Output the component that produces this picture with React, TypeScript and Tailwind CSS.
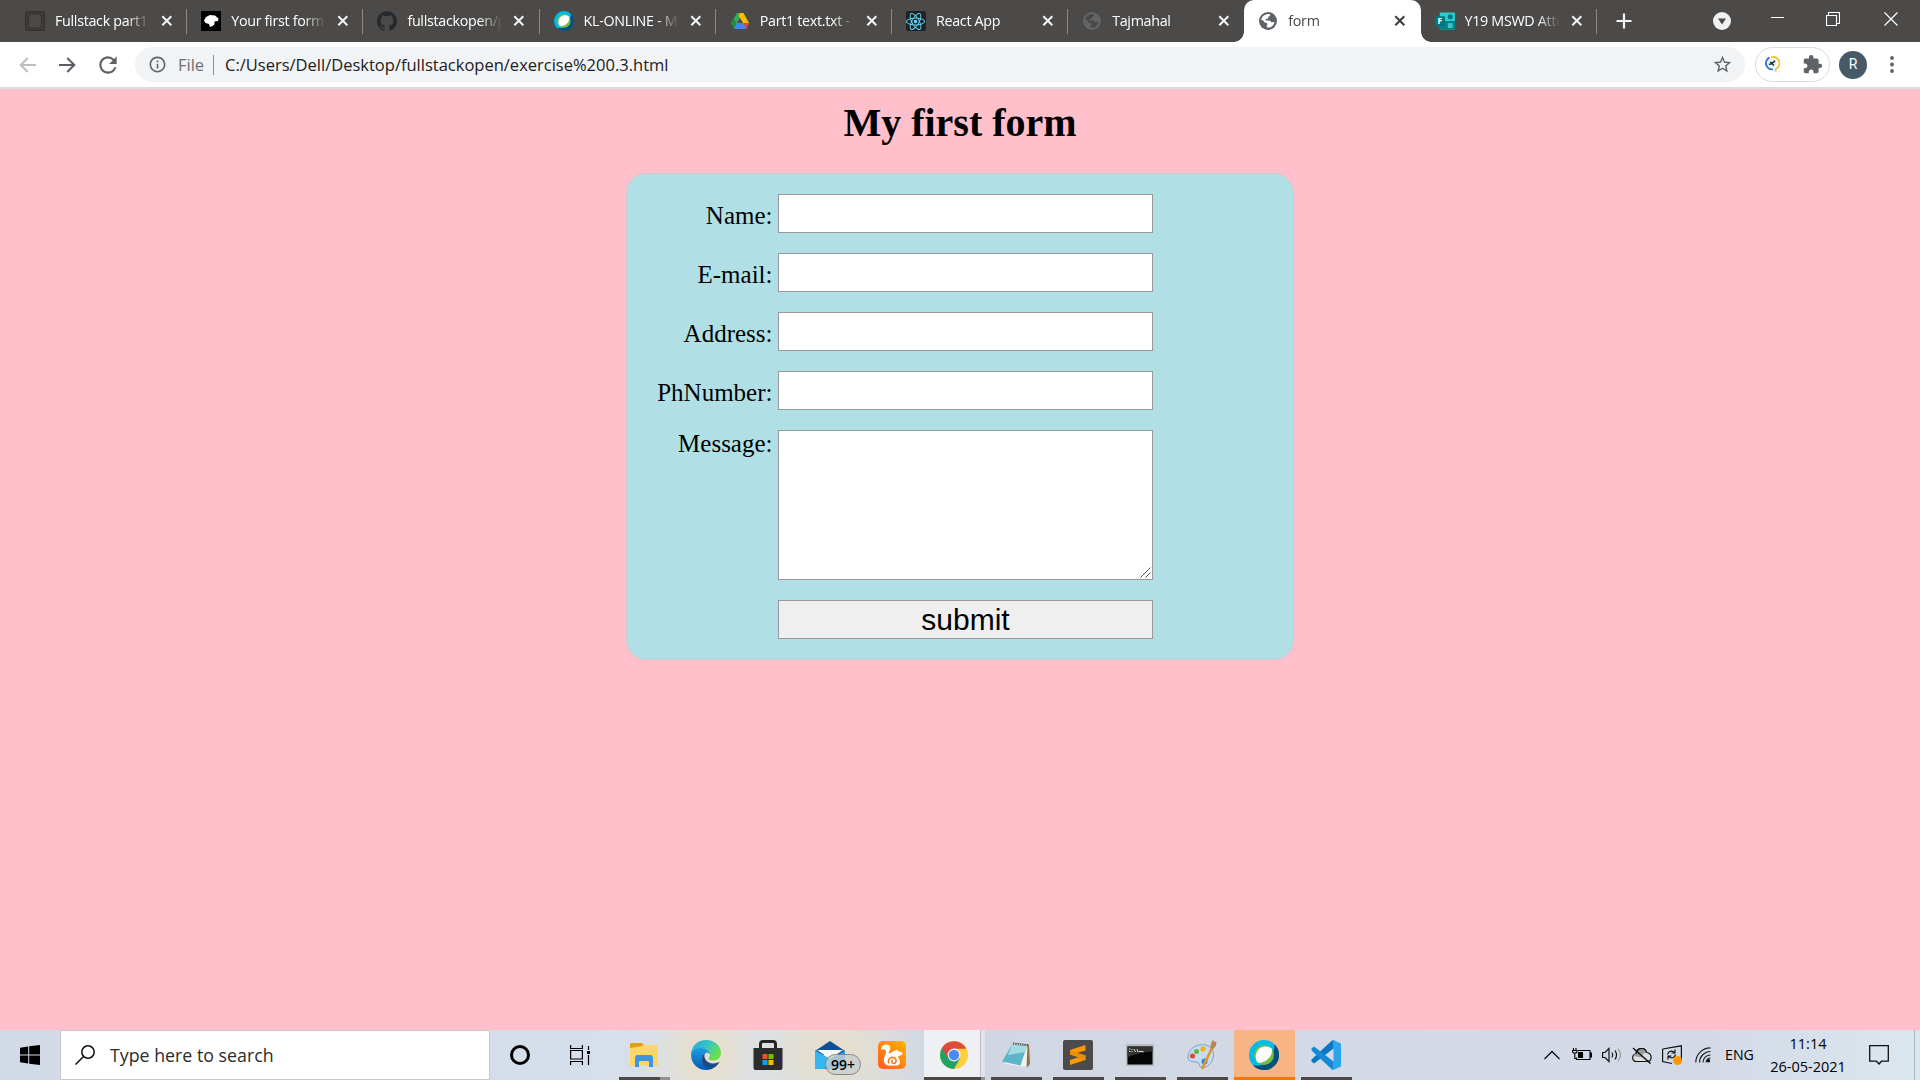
import React from "react";
import { SiGithub, SiReact } from "react-icons/si";
import { MdExtension, MdOutlineInfo, MdRefresh, MdStarBorder } from "react-icons/md";

const Close = ({ dark = false }: { dark?: boolean }) => (
  <svg width="12" height="12" viewBox="0 0 12 12" fill="none" stroke={dark ? "#3c3c3c" : "#f3f3f3"} strokeWidth="2">
    <path d="M1.300 1.300l9 9M10.300 1.300l-9 9" />
  </svg>
);

const Globe = ({ color, land }: { color: string; land: string }) => (
  <svg width="20" height="20" viewBox="0 0 20 20">
    <circle cx="10" cy="10" r="9" fill={color} />
    <path
      d="M3 8.500C4 5.500 6.500 3.500 9.500 3l2.500.3c.6 1.200-.2 2.200-1.600 2.400L9.800 7.800 7.600 8l.3 1.600h3.300c1.200 0 1.500 1.800 3 1.700l2.300-.4c-.4 2.500-2 4.600-4.300 5.500l-1.700.2-1.800-.3v-1.700l1-1.500-1.200-1.200-2-.4L5.500 9.800z"
      fill={land}
    />
  </svg>
);

const Webex = ({ size }: { size: number }) => (
  <svg width={size} height={size} viewBox="0 0 30 30">
    <circle cx="15" cy="15" r="15" fill="#00bceb" />
    <path d="M25.500 4.300A15 15 0 1 1 4 25.200 Q17 27 21.500 19 Q25.500 12 25.500 4.300z" fill="#075077" />
    <circle cx="15" cy="15" r="10" fill="#6cc04a" />
    <path d="M22.700 8.600C24.500 16 17 23.500 8.800 22.800A10 10 0 0 1 22.700 8.600z" fill="#fff" />
  </svg>
);

const Drive = () => (
  <svg width="20" height="20" viewBox="0 0 20 20">
    <path d="M7 2h4.500L10 8l-5.800 9L1 12z" fill="#34a853" />
    <path d="M10 2h3.500l5.500 10h-6L8.500 4.500z" fill="#fbbc04" />
    <path d="M6.200 12H19l-3 6H4z" fill="#4285f4" />
    <path d="M13.500 12H19l-3 6z" fill="#ea4335" />
    <path d="M4 18l-3-6 2.500-4 2.800 4z" fill="#1e8e3e" />
    <path d="M10 7.200L7.300 12h5.400z" fill="#4c4a48" />
  </svg>
);

const Forms = () => (
  <svg width="21" height="18" viewBox="0 0 21 18">
    <rect x="5" width="16" height="18" rx="1" fill="#2ccbd2" />
    <rect x="5" y="9" width="16" height="9" fill="#038387" />
    <circle cx="16" cy="4.500" r="2.700" fill="#04777c" />
    <rect x="13.500" y="11.300" width="5" height="5" fill="#37c6d0" />
    <rect y="4" width="10.500" height="10.500" rx="1" fill="#02777b" />
    <text x="2.600" y="12.300" fontSize="9" fontWeight="700" fill="#fff" fontFamily="Open Sans, sans-serif">F</text>
  </svg>
);

const tabs: { title: string; icon: React.ReactNode; active?: boolean }[] = [
  {
    title: "Fullstack part1",
    icon: (
      <svg width="20" height="20" viewBox="0 0 20 20" fill="none">
        <rect x=".8" y=".8" width="18.400" height="18.400" rx="2.500" fill="#44423f" stroke="#33322f" strokeWidth="1.500" />
        <rect x="3.500" y="3" width="13" height="14" rx="2" fill="#4c4a48" stroke="#32312f" strokeWidth="1.200" />
      </svg>
    ),
  },
  {
    title: "Your first form",
    icon: (
      <svg width="20" height="20" viewBox="0 0 20 20">
        <rect width="20" height="20" fill="#000" />
        <path d="M3 9.500L5 6l4-2 5 .5 3.500 3L17 10l-3.500.5v3l-2 1.500L9 16l-1-3-3.500-1z" fill="#fff" />
      </svg>
    ),
  },
  { title: "fullstackopen/p", icon: <SiGithub size={20} color="#24292e" /> },
  { title: "KL-ONLINE - M", icon: <Webex size={20} /> },
  { title: "Part1 text.txt - G", icon: <Drive /> },
  {
    title: "React App",
    icon: (
      <span className="flex size-5 items-center justify-center rounded-[2px] bg-[#222]">
        <SiReact size={19} color="#61dafb" />
      </span>
    ),
  },
  { title: "Tajmahal", icon: <Globe color="#626466" land="#4c4a48" /> },
  { title: "form", icon: <Globe color="#5f6368" land="#fff" />, active: true },
  { title: "Y19 MSWD Atte", icon: <Forms /> },
];

function Tab({ title, icon, active, line }: { title: string; icon: React.ReactNode; active?: boolean; line: boolean }) {
  return (
    <div className={`relative flex h-[42px] w-[176.200px] shrink-0 items-center pl-[14px] ${active ? "rounded-t-[10px] bg-white" : ""}`}>
      {active && (
        <>
          <span className="absolute bottom-0 -left-[10px] size-[10px] bg-[radial-gradient(circle_at_top_left,#4c4a48_9.500px,#fff_10px)]" />
          <span className="absolute -right-[10px] bottom-0 size-[10px] bg-[radial-gradient(circle_at_top_right,#4c4a48_9.500px,#fff_10px)]" />
        </>
      )}
      <span className="flex w-5 shrink-0 justify-center">{icon}</span>
      <span
        className={`ml-[10px] w-[95px] shrink-0 overflow-hidden text-[14.300px] leading-5 tracking-[-0.300px] whitespace-nowrap [mask-image:linear-gradient(to_right,black_76%,transparent)] ${active ? "text-[#45494d]" : "text-white"}`}
      >
        {title}
      </span>
      <span className="ml-[11px] flex">
        <Close dark={active} />
      </span>
      {line && <span className="absolute top-[9px] right-0 h-[25px] w-px bg-[#8b8a88]" />}
    </div>
  );
}

function TitleBar() {
  return (
    <div className="flex h-[42px] bg-[#4c4a48] pl-[11px]">
      {tabs.map((t, i) => (
        <Tab key={t.title} {...t} line={i !== 6 && i !== 7} />
      ))}
      <div className="flex h-[42px] flex-1 items-center pl-[19px]">
        <svg width="16" height="16" viewBox="0 0 16 16" stroke="#f5f5f5" strokeWidth="2.200">
          <path d="M8 .5v15M.5 8h15" />
        </svg>
        <svg className="ml-[81px]" width="18" height="18" viewBox="0 0 18 18">
          <circle cx="9" cy="9" r="9" fill="#f1f1f1" />
          <path d="M5 6.500h8L9 12.500z" fill="#4c4a48" />
        </svg>
        <svg className="mb-[8px] ml-10" width="13" height="1" viewBox="0 0 13 1">
          <path d="M0 .5h13" stroke="#fff" />
        </svg>
        <svg className="mb-[5px] ml-[42px]" width="14" height="14" viewBox="0 0 14 14" fill="none" stroke="#fff">
          <path d="M.5 3.500h10v10h-10zM2.500 3.500v-3h11v11h-3" strokeWidth="1.100" />
        </svg>
        <svg className="mb-[5px] ml-11" width="14" height="14" viewBox="0 0 14 14" stroke="#fff" strokeWidth="1.200">
          <path d="M.5.5l13 13M13.500.5l-13 13" />
        </svg>
      </div>
    </div>
  );
}

const Arrow = ({ color, flip }: { color: string; flip?: boolean }) => (
  <svg className={flip ? "-scale-x-100" : ""} width="17" height="16" viewBox="0 0 17 16" fill="none" stroke={color} strokeWidth="2">
    <path d="M0 8h15M8.300 1l7 7-7 7" />
  </svg>
);

function Toolbar() {
  return (
    <div className="flex h-[47px] items-center border-b-2 border-[#d9dce0] bg-white pl-[19px]">
      <Arrow color="#bbbdbf" flip />
      <span className="ml-[23px] flex">
        <Arrow color="#5a5e63" />
      </span>
      <MdRefresh size={26} color="#5f6368" className="ml-[19px]" />
      <div className="ml-[14px] flex h-[35px] w-[1610px] items-center rounded-full bg-[#f1f3f4] pl-[13px] text-[16.500px] leading-6">
        <MdOutlineInfo size={19} color="#5f6368" />
        <span className="ml-[11px] w-[28px] text-[#6b6f74]">File</span>
        <span className="ml-[7px] h-5 w-px bg-[#8b8e92]" />
        <span className="ml-[11px] whitespace-nowrap text-[#202124]">C:/Users/Dell/Desktop/fullstackopen/exercise%200.3.html</span>
        <MdStarBorder size={21} color="#5f6368" className="mr-3 ml-auto" />
      </div>
      <div className="ml-[10px] flex h-[35px] w-[75px] items-center rounded-full border border-[#dadce0] pl-[9px]">
        <svg width="15" height="17" viewBox="0 0 17 19" fill="none" strokeWidth="2.200">
          <path d="M5 1.800A7 7 0 0 0 9 15" stroke="#2d6bd0" />
          <path d="M7 1.300A7 7 0 0 1 11.500 14.800" stroke="#fcc02f" />
          <circle cx="8" cy="8.300" r="4" stroke="#dbeaf8" strokeWidth="1.500" />
          <path d="M4.500 9.500l2.500-.7 4.500-3.500M6 6.500l4 4" stroke="#1e2b3a" strokeWidth="1.700" />
          <path d="M10 15h3v4z" fill="#bbc4cd" />
        </svg>
        <MdExtension size={21} color="#5f6368" className="ml-[22px]" />
      </div>
      <span className="ml-[9px] flex size-7 items-center justify-center rounded-full bg-[#455a64] text-[14px] text-white font-['Roboto',sans-serif]">R</span>
      <svg className="ml-[23px]" width="4" height="17" viewBox="0 0 4 17" fill="#5f6368">
        <circle cx="2" cy="2" r="1.900" />
        <circle cx="2" cy="8.500" r="1.900" />
        <circle cx="2" cy="15" r="1.900" />
      </svg>
    </div>
  );
}

function Page() {
  return (
    <div className="flex flex-1 flex-col items-center bg-[#ffc0cb] text-black font-['Liberation_Serif',serif]">
      <h1 className="mt-[11px] text-[40px] leading-[46px] font-bold">My first form</h1>
      <form className="mt-[27px] flex h-[487px] w-[668px] flex-col gap-5 rounded-[20px] border border-[#cccccc] bg-[#b0e0e6] pt-5">
        {["Name:", "E-mail:", "Address:", "PhNumber:"].map((l) => (
          <label key={l} className="flex h-[39px]">
            <span className="w-[145.500px] pt-[8px] text-right text-[25px] leading-[28px]">{l}</span>
            <input className="ml-[5.500px] h-[39px] w-[375px] border border-[#999] bg-white" />
          </label>
        ))}
        <label className="relative flex h-[150px]">
          <span className="w-[145.500px] text-right text-[25px] leading-[28px]">Message:</span>
          <textarea className="ml-[5.500px] h-[150px] w-[375px] resize-none border border-[#999] bg-white" />
          <svg className="absolute top-[137px] left-[513px]" width="11" height="11" viewBox="0 0 11 11" stroke="#555" strokeWidth="1">
            <path d="M.5 10.500l10-10M5.500 10.500l5-5" />
          </svg>
        </label>
        <button type="button" className="ml-[151px] h-[39px] w-[375px] border border-[#999] bg-[#efefef] text-[30px] leading-[37px] font-['Liberation_Sans',sans-serif]">
          submit
        </button>
      </form>
    </div>
  );
}

const Explorer = () => (
  <svg width="28" height="24" viewBox="0 0 28 24">
    <path d="M0 1.500Q0 0 1.500 0H12l2 2v4H0z" fill="#e0a010" />
    <path d="M0 5l11-1.500L14 2h12q2 0 2 1.500V22q0 1-1 1H1q-1 0-1-1z" fill="#fbd668" />
    <path d="M5 24V15q0-3 3-3h12q3 0 3 3v9h-4v-5q0-1-1-1h-8q-1 0-1 1v5z" fill="#3b95df" />
  </svg>
);

const Edge = () => (
  <svg width="30" height="30" viewBox="0 0 30 30">
    <defs>
      <linearGradient id="eg" x1="0" y1="0" x2="1" y2=".5">
        <stop offset="0" stopColor="#2aa7dc" />
        <stop offset=".5" stopColor="#35c1c9" />
        <stop offset="1" stopColor="#6ce04b" />
      </linearGradient>
      <linearGradient id="eb" x1="0" y1="0" x2="0" y2="1">
        <stop offset="0" stopColor="#1b9de2" />
        <stop offset="1" stopColor="#0c5ab4" />
      </linearGradient>
    </defs>
    <path d="M0 14C1 5 7 0 15 0c9 0 15 6 15 13 0 5-3.500 7.500-7.500 7.500-3 0-5-1-5-2 0-.7 1.500-1.500 1.500-4C19 11 15 8.500 10 8.500 5 8.500 1 11 0 14z" fill="url(#eg)" />
    <path d="M0 14.500C.5 10 5 8 9.500 8c5.500 0 9.500 3 9.500 6.500-1-1.800-3-2-4.500-1.500C9.500 15 10 26 22 28.200 19 30 17 30 15 30 7 30 0 24 0 14.500z" fill="url(#eb)" />
    <path d="M14.500 13C9 15 9.500 29 20 29c3.500-1 6.500-3.500 8.500-7-1 0-9.500 4.500-14-2.500-1.500-2.500-1.500-5 0-6.500z" fill="#164c8e" />
  </svg>
);

const Store = () => (
  <svg width="30" height="30" viewBox="0 0 30 30">
    <path d="M7.500 9V4q0-2.500 2.500-2.500h10q2.500 0 2.500 2.500v5" fill="none" stroke="#262626" strokeWidth="3" />
    <path d="M.5 8h29v20q0 2-2 2h-25q-2 0-2-2z" fill="#2c2c2c" />
    <path d="M9.500 14H14.500V19H9.500z" fill="#f25022" />
    <path d="M15.500 14H20.500V19H15.500z" fill="#7fba00" />
    <path d="M9.500 20H14.500V25H9.500z" fill="#00a4ef" />
    <path d="M15.500 20H20.500V25H15.500z" fill="#ffb900" />
  </svg>
);

const Mail = () => (
  <span className="relative flex">
    <svg width="30" height="28" viewBox="0 0 30 28">
      <path d="M0 10L15 0l15 10v4H0z" fill="#0f4f96" />
      <path d="M2 9h26l-13 9z" fill="#f6f8fa" />
      <path d="M0 9.500L15 18l15-8.500V28H0z" fill="#1e98e4" />
      <path d="M0 28V9.500L18 20 8 28z" fill="#35b6f1" />
    </svg>
    <span className="absolute top-[13px] left-[10px] flex h-[21px] w-9 items-center justify-center rounded-full border border-[#858585] bg-[#c9cdcf]/80 text-[14px] font-semibold text-black">
      99+
    </span>
  </span>
);

const UcBrowser = () => (
  <svg width="28" height="28" viewBox="0 0 28 28">
    <defs>
      <linearGradient id="uc" x1="1" y1="0" x2="0" y2="1">
        <stop offset="0" stopColor="#ffb400" />
        <stop offset="1" stopColor="#ff5a1f" />
      </linearGradient>
    </defs>
    <rect width="28" height="28" rx="5" fill="url(#uc)" />
    <path d="M3 9C3 5 6 3 9 3.500c4 .7 4 5 2 7-1 1.500 0 2.500 1.500 1.500 2.500-2 5-2 6-3.500l1.500 1.500 4 1.500c1.500 1 0 3-4 3.500 0 2 2 3 2 6 0 2-1.500 3.500-3 3.500H10c-4-1-5-5-3.500-8.500C8 12.500 9 9 6.500 8.500 5 8 4 8 3 9z" fill="#fff" />
    <path d="M11 22.500c-2-4 2-7.500 5.500-5.500 3 2 1.500 5.500-1 5.500-2 0-2.500-2.500-.8-3.200" fill="none" stroke="#ff7d1c" strokeWidth="1.600" />
  </svg>
);

const Chrome = () => (
  <svg width="28" height="28" viewBox="0 0 28 28">
    <circle cx="14" cy="14" r="14" fill="#ffcd40" />
    <path d="M14 14L1.900 7A14 14 0 0 0 14 28l6-10.500z" fill="#1ea362" />
    <path d="M1.900 7A14 14 0 0 1 26.200 7.700H14L8 17.500z" fill="#dd4b3e" />
    <circle cx="14" cy="14" r="6.400" fill="#f1f1f1" />
    <circle cx="14" cy="14" r="5.200" fill="#4c8bf5" />
  </svg>
);

const Notepad = () => (
  <svg width="28" height="28" viewBox="0 0 28 28">
    <path d="M12 2l15 1.500L28 23l-3 3.500z" fill="#8c7442" />
    <path d="M11 2l14.500 2L24.500 26 3 23z" fill="#f0f1ee" />
    <path d="M10.500 3L25 5 18.500 24.500 0 20.500z" fill="#5eb5c9" />
    <path d="M10.500 3L25 5 23 11 6 14z" fill="#a4dce4" />
    <path d="M11 2.500L26 4.300" stroke="#555b5d" strokeWidth="2.200" strokeDasharray="1.300 1" />
  </svg>
);

const Sublime = () => (
  <svg width="30" height="30" viewBox="0 0 30 30">
    <rect width="30" height="30" rx="2" fill="#4b4b4b" />
    <path d="M7 10l15.500-5v5.500L13.500 13l9 2.500V20L7 25v-5l9-3-9-2.500z" fill="#ff9800" />
    <path d="M7 14.500v-4L22.500 15.500V20z" fill="#f08c00" />
  </svg>
);

const Cmd = () => (
  <svg width="28" height="22" viewBox="0 0 28 22">
    <rect width="28" height="22" fill="#b9bcbd" />
    <rect x="1.500" y="2.500" width="25" height="18" fill="#050505" />
    <path d="M1.500 2.500h25v5Q15 8 1.500 13z" fill="#333" />
    <path d="M3 5h1.500M3 7.500h1.500M6 5v1M6 7v1M8 5l1.500 3M11 5l1 3M12.500 7.500h5" stroke="#d8d8d8" />
  </svg>
);

const Paint = () => (
  <svg width="30" height="30" viewBox="0 0 30 30">
    <path d="M1 17C1 9 10 3 19 5c7 1.500 9 9 6.500 15-2 5-7 8-11 7.500-3-.5-1-4-3.500-5C8 21 1 23.500 1 17z" fill="#c4dcee" stroke="#7fa3bd" />
    <circle cx="5.500" cy="16" r="2.500" fill="#e0453a" />
    <circle cx="9.500" cy="11.500" r="2.500" fill="#5fb541" />
    <circle cx="16" cy="9" r="2.700" fill="#f2b51d" />
    <circle cx="17.500" cy="21.500" r="3" fill="#3f82d6" />
    <path d="M15 29L25 8" stroke="#de9330" strokeWidth="2.600" />
    <path d="M23.500 8l.5-4.500L26 0l2 2 1.500-.5-.5 4L26.500 9z" fill="#b98555" />
  </svg>
);

const VsCode = () => (
  <svg width="30" height="30" viewBox="0 0 30 30">
    <path d="M22.500 0L30 3.500v23L22.500 30z" fill="#2da4ee" />
    <path d="M22.500 8.500L3 23.500.5 21.500v-2L21 .5 22.500 0z" fill="#0b76c4" />
    <path d="M22.500 21.500L3 6.500.5 8.500v2L21 29.500l1.500.5z" fill="#1489d6" />
  </svg>
);

const apps: { icon: React.ReactNode; cell?: string; bar?: string }[] = [
  { icon: <Explorer />, bar: "left-[6px] w-[51px] bg-[linear-gradient(90deg,#4b4845_41px,#92918f_41px)]" },
  { icon: <Edge /> },
  { icon: <Store /> },
  { icon: <Mail /> },
  { icon: <UcBrowser /> },
  { icon: <Chrome />, cell: "bg-[linear-gradient(90deg,transparent_1px,#eef0f4_1px,#eef0f4_57px,#b9bdc5_57px,#b9bdc5_58px,#e1e4ea_58px)]", bar: "left-[1px] w-[61px] bg-[linear-gradient(90deg,#4b4845_57px,#92918f_57px)]" },
  { icon: <Notepad />, bar: "left-[6px] w-[51px] bg-[#4b4845]" },
  { icon: <Sublime />, bar: "left-[6px] w-[51px] bg-[#4b4845]" },
  { icon: <Cmd />, bar: "left-[6px] w-[51px] bg-[#4b4845]" },
  { icon: <Paint />, bar: "left-[6px] w-[51px] bg-[#4b4845]" },
  { icon: <Webex size={30} />, cell: "bg-[linear-gradient(90deg,transparent_1px,#f7b585_1px)]", bar: "left-[1px] w-[61px] bg-[#ff7300]" },
  { icon: <VsCode />, bar: "left-[6px] w-[51px] bg-[#4b4845]" },
];

function Tray() {
  return (
    <div className="ml-auto flex h-full items-center text-[14.200px] text-black">
      <svg width="16" height="10" viewBox="0 0 16 10" fill="none" stroke="#111" strokeWidth="1.300">
        <path d="M.5 9L8 1.500 15.500 9" />
      </svg>
      <svg className="ml-3" width="20" height="14" viewBox="0 0 20 14" fill="none" stroke="#000" strokeWidth="1.100">
        <path d="M6 2.500h12v9H4.500v-2M18.500 5v4h1V5z" />
        <path d="M6.500 4.500h4v5h-4z" fill="#000" />
        <path d="M1.500 0v2M4 0v2M.5 2.500h4.500v1.500l-1 1h-2.500l-1-1zM2.800 5v5.500h2" />
      </svg>
      <svg className="ml-[10px]" width="20" height="16" viewBox="0 0 20 16" fill="none" stroke="#111" strokeWidth="1.200">
        <path d="M.6 5.500H3l4-4v13l-4-4H.6z" />
        <path d="M10 5.500q1.500 2.500 0 5M13 3.500q3 4.500 0 9" />
        <path d="M16 1.500q5 6.500 0 13" stroke="#999" />
      </svg>
      <svg className="ml-[10px]" width="20" height="17" viewBox="0 0 20 17" fill="none" stroke="#111" strokeWidth="1.200">
        <path d="M4.500 14.500C-.5 14.500-.5 7.500 4 7 4.500.500 13-.500 14.500 5.500c6 .5 6 9 1 9z" fill="#dedfe0" />
        <path d="M1.500 9C2 7.500 3 7 4 7 4.500.500 13-.500 14.500 5.500c-3 0-4 2.500-4.500 5z" fill="#9b9c9d" stroke="none" />
        <path d="M4 7C4.500.500 13-.500 14.500 5.500" />
        <path d="M1 1l17.500 15.500" strokeWidth="1.500" />
      </svg>
      <svg className="ml-[10px]" width="20" height="20" viewBox="0 0 20 20" fill="none" stroke="#111" strokeWidth="1.200">
        <path d="M.6 4L19.400.8v15.500M10 18.500L.6 16.500V4" />
        <path d="M5.500 9.500Q7 5 11 6.500l1.500 1M13 4.500v3.500H9.500M13.500 9.500Q12 14 8 12.500L6.500 11M6 14.500V11h3.500" />
        <circle cx="15.500" cy="15.500" r="4.500" fill="#ff9800" stroke="none" />
      </svg>
      <svg className="ml-[13px]" width="16" height="16" viewBox="0 0 16 16" fill="none" stroke="#222" strokeWidth="1.200">
        <path d="M.8 15.500A14.700 14.700 0 0 1 15.500.8M4.500 15.500A11 11 0 0 1 15.500 4.500M8 15.500A7.500 7.500 0 0 1 15.500 8" />
        <path d="M11 15.500A4.500 4.500 0 0 1 15.500 11" />
        <circle cx="13.500" cy="13.700" r="1.700" fill="#000" stroke="none" />
      </svg>
      <span className="ml-[14px] w-7">ENG</span>
      <div className="ml-[15px] flex w-[80px] flex-col items-center text-[14.500px] leading-[23px] whitespace-nowrap">
        <span>11:14</span>
        <span>26-05-2021</span>
      </div>
      <svg className="ml-[21px]" width="20" height="20" viewBox="0 0 20 20" fill="none" stroke="#111" strokeWidth="1.300">
        <path d="M.7.7h18.600v15.500H12.500L10 19l-2.500-2.800H.7z" />
      </svg>
      <span className="ml-[25px] h-full w-[6px] border-l border-[#aab4bd]" />
    </div>
  );
}

function Taskbar() {
  return (
    <div className="flex h-[50px] bg-[radial-gradient(ellipse_60px_60px_at_705px_50%,#ebdfc6,transparent),radial-gradient(ellipse_85px_60px_at_835px_50%,#e9dfc8,transparent),linear-gradient(90deg,#d2dae6_0%,#d5dfeb_30%,#dbe1e6_40%,#d0d7e2_50%,#d4dbe7_75%,#d3d9e6_88%,#dbe7ee_100%)]">
      <div className="flex w-[60px] items-center justify-center">
        <svg width="20" height="20" viewBox="0 0 20 20" fill="#000">
          <path d="M0 2.800L8.200 1.500v8H0zM9.200 1.300L20 0v9.500H9.200zM0 10.500h8.200v8L0 17.300zM9.200 10.500H20V20L9.200 18.700z" />
        </svg>
      </div>
      <div className="flex w-[430px] items-center border border-[#c8c8c8] bg-white pl-[14px]">
        <svg width="20" height="20" viewBox="0 0 20 20" fill="none" stroke="#111" strokeWidth="1.500">
          <circle cx="13" cy="7" r="6.200" />
          <path d="M8.500 11.500L.5 19.500" />
        </svg>
        <span className="ml-[15px] text-[17.800px] leading-6 text-[#2b2b2b]">Type here to search</span>
      </div>
      <div className="flex w-[60px] items-center justify-center">
        <span className="size-5 rounded-full border-[3px] border-black" />
      </div>
      <div className="mr-[3px] flex w-[60px] items-center justify-center">
        <svg width="20" height="20" viewBox="0 0 20 20" fill="none" stroke="#000" strokeWidth="1.200">
          <path d="M.6 0v3.500h11.800V0M.6 20v-3.500h11.800V20M.6 5.500h11.800v8.500H.6zM18.500 1v4M18.500 10v10" />
          <path d="M17 6h3v3h-3z" fill="#000" stroke="none" />
        </svg>
      </div>
      {apps.map((a, i) => (
        <div key={i} className={`relative flex w-[62px] items-center justify-center ${a.cell ?? ""}`}>
          {a.icon}
          {a.bar && <span className={`absolute bottom-0 h-[3px] ${a.bar}`} />}
        </div>
      ))}
      <Tray />
    </div>
  );
}

export default function App() {
  return (
    <div className="flex h-[1080px] w-[1920px] flex-col overflow-hidden font-['Open_Sans',sans-serif]">
      <TitleBar />
      <Toolbar />
      <Page />
      <Taskbar />
    </div>
  );
}
